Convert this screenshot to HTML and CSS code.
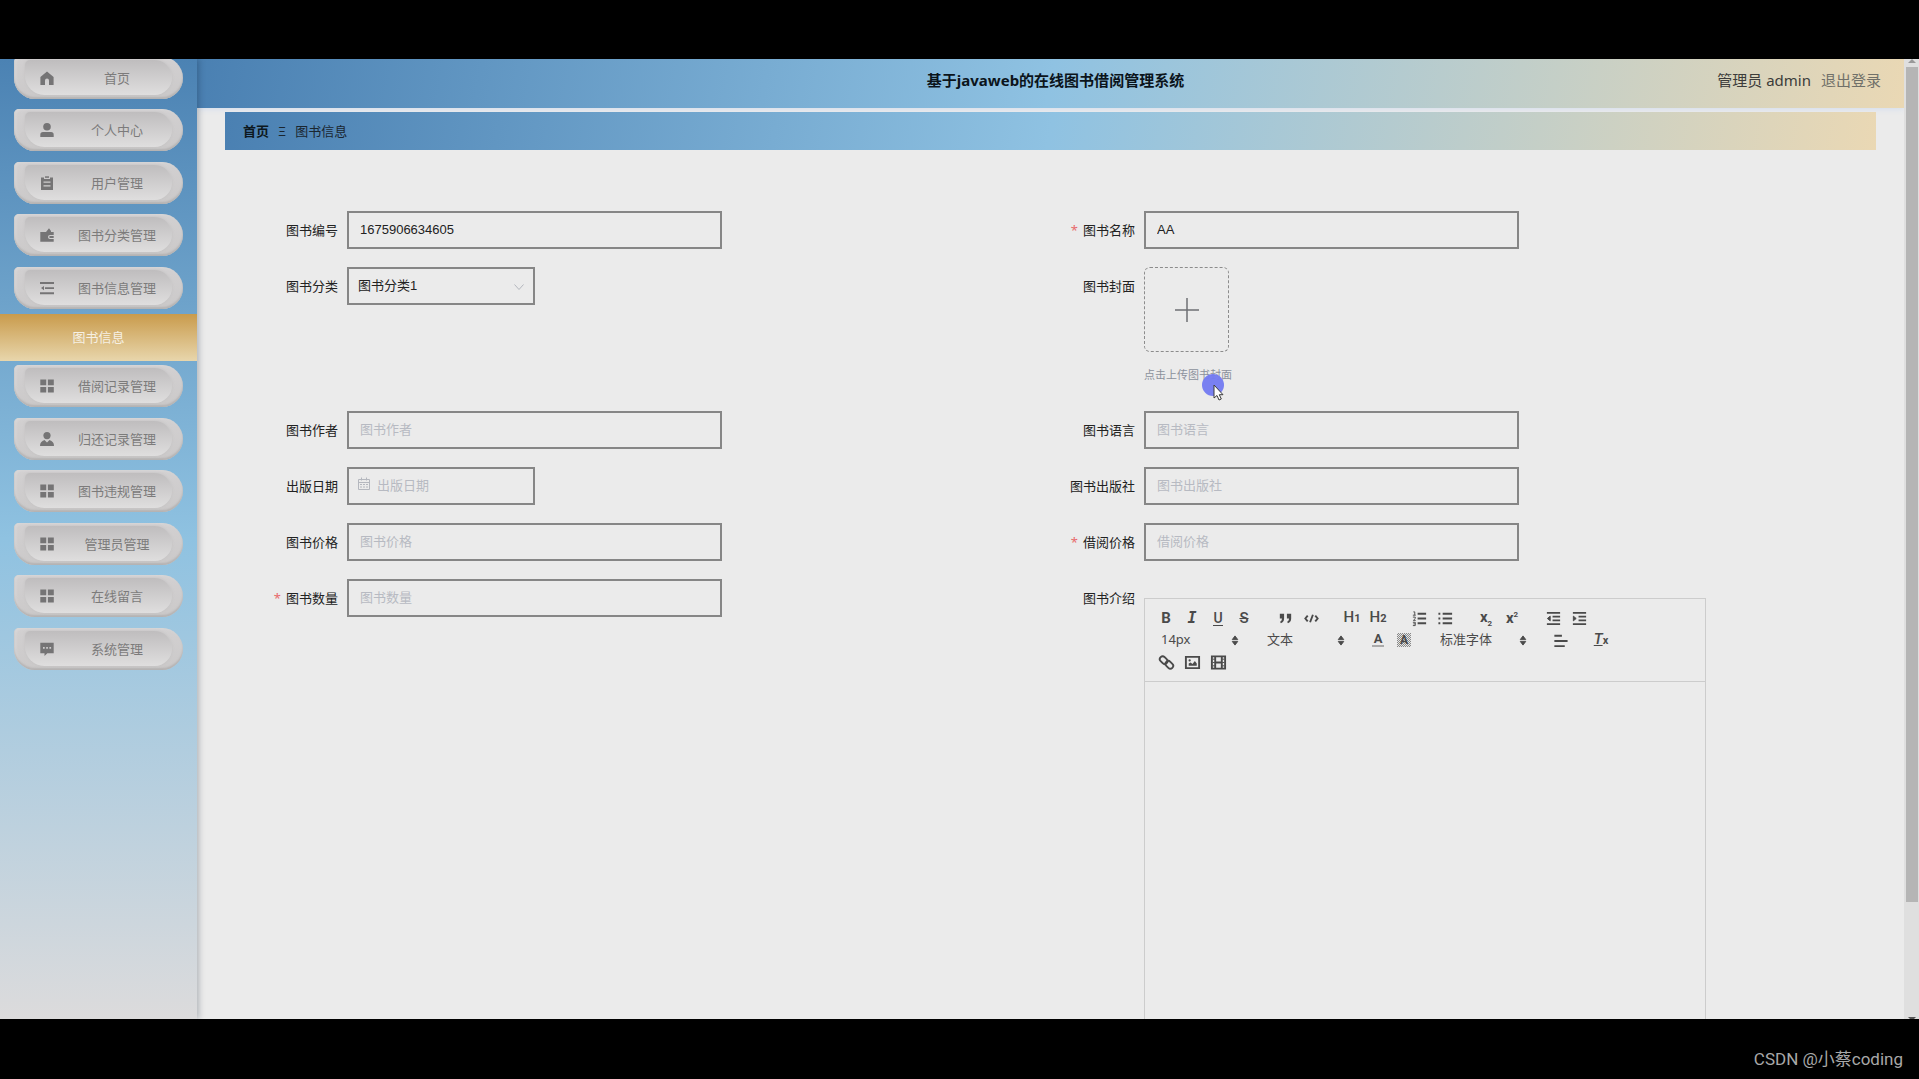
FILE: index.html
```html
<!DOCTYPE html>
<html lang="zh-CN">
<head>
<meta charset="utf-8">
<title>基于javaweb的在线图书借阅管理系统</title>
<link rel="stylesheet" href="styles.css">
</head>
<body>
<svg class="sprite" aria-hidden="true">
  <symbol id="i-home" viewBox="0 0 14 14"><path d="M7 .5 13.600 6v8H9V9.500a2 2 0 0 0-4 0V14H.4V6z"/></symbol>
  <symbol id="i-user" viewBox="0 0 14 14"><circle cx="7" cy="3.800" r="3.800"/><path d="M.3 14v-2.200A2.800 2.800 0 0 1 3 9h8a2.800 2.800 0 0 1 2.700 2.800V14z"/></symbol>
  <symbol id="i-order" viewBox="0 0 14 14"><path fill-rule="evenodd" d="M1 1.500h3V3h6V1.500h3V14H1zM3.500 5.500v1.300h7V5.500zm0 3.700v1.300h7V9.200z"/><path d="M5 .3h4v1.500H5z"/></symbol>
  <symbol id="i-wallet" viewBox="0 0 14 14"><path fill-rule="evenodd" d="M.3 4H6l3-3.700L11 3v1h2.700v3H10a2 2 0 0 0 0 4h3.700v2.700H.3z"/><path d="M10.200 8h3.500v2h-3.500a1 1 0 0 1 0-2z"/></symbol>
  <symbol id="i-fold" viewBox="0 0 14 14"><path d="M0 1h14v2H0zM5 6.200h9v1.800H5zM0 11.300h14v2H0zM1 7.100 4 5v4.200z"/></symbol>
  <symbol id="i-grid" viewBox="0 0 14 14"><path d="M.3.500h5.900v5.700H.3zM7.900.500h5.900v5.700H7.900zM.3 7.900h5.900v5.700H.3zM7.900 7.900h5.900v5.700H7.900z"/></symbol>
  <symbol id="i-custom" viewBox="0 0 14 14"><circle cx="7" cy="3.600" r="3.600"/><path d="M0 14c0-3.200 1.500-5 4.500-6L7 10.500 9.500 8c3 1 4.500 2.800 4.500 6z"/></symbol>
  <symbol id="i-chat" viewBox="0 0 14 14"><path fill-rule="evenodd" d="M.3.700h13.400v10.600H7.300L4.500 14v-2.700H.3zM3 5v1.700h1.700V5zm3.200 0v1.700h1.700V5zm3.200 0v1.700h1.700V5z"/></symbol>
  <symbol id="i-sort" viewBox="0 0 8 12"><path d="M4 1 7 5H1zM4 11 1 7h6z" stroke="currentColor" stroke-linejoin="round"/></symbol>
</svg>

<div class="letterbox letterbox-top"></div>
<div class="app">
  <nav class="sidebar">
    <ul class="menu">
      <li><a class="pill" href="#"><span class="face"><svg class="ico"><use href="#i-home"/></svg><span class="txt">首页</span></span></a></li>
      <li><a class="pill" href="#"><span class="face"><svg class="ico"><use href="#i-user"/></svg><span class="txt">个人中心</span></span></a></li>
      <li><a class="pill" href="#"><span class="face"><svg class="ico"><use href="#i-order"/></svg><span class="txt">用户管理</span></span></a></li>
      <li><a class="pill" href="#"><span class="face"><svg class="ico"><use href="#i-wallet"/></svg><span class="txt">图书分类管理</span></span></a></li>
      <li class="open"><a class="pill" href="#"><span class="face"><svg class="ico"><use href="#i-fold"/></svg><span class="txt">图书信息管理</span></span></a>
        <a class="sub" href="#">图书信息</a></li>
      <li><a class="pill" href="#"><span class="face"><svg class="ico"><use href="#i-grid"/></svg><span class="txt">借阅记录管理</span></span></a></li>
      <li><a class="pill" href="#"><span class="face"><svg class="ico"><use href="#i-custom"/></svg><span class="txt">归还记录管理</span></span></a></li>
      <li><a class="pill" href="#"><span class="face"><svg class="ico"><use href="#i-grid"/></svg><span class="txt">图书违规管理</span></span></a></li>
      <li><a class="pill" href="#"><span class="face"><svg class="ico"><use href="#i-grid"/></svg><span class="txt">管理员管理</span></span></a></li>
      <li><a class="pill" href="#"><span class="face"><svg class="ico"><use href="#i-grid"/></svg><span class="txt">在线留言</span></span></a></li>
      <li><a class="pill" href="#"><span class="face"><svg class="ico"><use href="#i-chat"/></svg><span class="txt">系统管理</span></span></a></li>
    </ul>
  </nav>

  <div class="main">
    <header class="header">
      <h1 class="title">基于javaweb的在线图书借阅管理系统</h1>
      <div class="account"><span>管理员 admin</span><a href="#">退出登录</a></div>
    </header>
    <div class="crumbs"><a href="#">首页</a><span class="sep">Ξ</span><span>图书信息</span></div>

    <form class="form">
      <div class="item">
        <label for="no">图书编号</label>
        <div class="field"><input id="no" class="box" type="text" value="1675906634605"></div>
      </div>
      <div class="item">
        <label for="name" class="required">图书名称</label>
        <div class="field"><input id="name" class="box" type="text" value="AA"></div>
      </div>
      <div class="item">
        <label for="type">图书分类</label>
        <div class="field"><div class="short">
          <select id="type" class="box"><option>图书分类1</option></select>
          <svg class="chev" viewBox="0 0 12 12"><path d="M1.500 3.500 6 8.500l4.500-5" fill="none" stroke="currentColor"/></svg>
        </div></div>
      </div>
      <div class="item">
        <label for="cover">图书封面</label>
        <div class="field">
          <button id="cover" class="upload" type="button" aria-label="上传图书封面"><svg viewBox="0 0 24 24"><path d="M12 0v24M0 12h24" fill="none" stroke="currentColor" stroke-width="1.500"/></svg></button>
          <div class="hint">点击上传图书封面
            <svg class="pointer" viewBox="0 0 26 30" aria-hidden="true"><circle cx="11" cy="11" r="11" fill="#737bf2"/><path d="M12 11v13l3-2.500 2 4.500 2.300-1-2-4.300h3.700z" fill="#fff" stroke="#333"/></svg>
          </div>
        </div>
      </div>
      <div class="item">
        <label for="author">图书作者</label>
        <div class="field"><input id="author" class="box" type="text" placeholder="图书作者"></div>
      </div>
      <div class="item">
        <label for="lang">图书语言</label>
        <div class="field"><input id="lang" class="box" type="text" placeholder="图书语言"></div>
      </div>
      <div class="item">
        <label for="date">出版日期</label>
        <div class="field"><div class="short">
          <svg class="cal" viewBox="0 0 14 14" fill="none" stroke="currentColor"><path d="M1.500 2.500h11v10h-11zM1.500 5.500h11M4.500 .5v3M9.500 .5v3M3 7.500h2m1 0h2m1 0h2M3 10h2m1 0h2m1 0h2"/></svg>
          <input id="date" class="box dated" type="text" placeholder="出版日期">
        </div></div>
      </div>
      <div class="item">
        <label for="press">图书出版社</label>
        <div class="field"><input id="press" class="box" type="text" placeholder="图书出版社"></div>
      </div>
      <div class="item">
        <label for="price">图书价格</label>
        <div class="field"><input id="price" class="box" type="text" placeholder="图书价格"></div>
      </div>
      <div class="item">
        <label for="rent" class="required">借阅价格</label>
        <div class="field"><input id="rent" class="box" type="text" placeholder="借阅价格"></div>
      </div>
      <div class="item">
        <label for="count" class="required">图书数量</label>
        <div class="field"><input id="count" class="box" type="text" placeholder="图书数量"></div>
      </div>
      <div class="item">
        <label for="intro">图书介绍</label>
        <div class="field">
          <div class="editor">
            <div class="toolbar">
              <div class="group">
                <button type="button"><b>B</b></button>
                <button type="button"><i class="slab">I</i></button>
                <button type="button"><span class="under">U</span></button>
                <button type="button"><s>S</s></button>
              </div>
              <div class="group">
                <button type="button" aria-label="引用"><svg viewBox="0 0 18 18"><path d="M3 4h4.500v5c0 2.500-1.200 4.200-3.400 5l-.9-1.500C4.600 11.700 5.200 10.500 5.200 9H3zM10.500 4H15v5c0 2.500-1.200 4.200-3.400 5l-.9-1.500c1.400-.8 2-2 2-3.500h-2.200z"/></svg></button>
                <button type="button" aria-label="代码"><svg viewBox="0 0 18 18" class="line"><path d="M5 6 2.500 9 5 12M13 6l2.500 3L13 12M10.500 5l-3 8"/></svg></button>
              </div>
              <div class="group">
                <button type="button"><span class="head">H<small>1</small></span></button>
                <button type="button"><span class="head">H<small>2</small></span></button>
              </div>
              <div class="group">
                <button type="button" aria-label="有序列表"><svg viewBox="0 0 18 18" class="line"><path d="M7 4h9M7 9h9M7 14h9"/><path stroke-width="1" d="M2.500 2h1.500v3.500M2 5.500h3M2 7.500h2.500v1.500L2.500 11H5M2 13h2.500v3.500H2M2.500 14.700h2"/></svg></button>
                <button type="button" aria-label="无序列表"><svg viewBox="0 0 18 18" class="line"><path d="M6 4h10M6 9h10M6 14h10M1.500 4h2M1.500 9h2M1.500 14h2"/></svg></button>
              </div>
              <div class="group">
                <button type="button"><span class="script">x<sub>2</sub></span></button>
                <button type="button"><span class="script">x<sup>2</sup></span></button>
              </div>
              <div class="group">
                <button type="button" aria-label="减少缩进"><svg viewBox="0 0 18 18" class="line"><path d="M2 3h14M8 7h8M8 11h8M2 15h14"/><path d="M5.500 6.500v5L2.500 9z" fill="currentColor" stroke-width="1"/></svg></button>
                <button type="button" aria-label="增加缩进"><svg viewBox="0 0 18 18" class="line"><path d="M2 3h14M8 7h8M8 11h8M2 15h14"/><path d="M2.500 6.500v5l3-2.500z" fill="currentColor" stroke-width="1"/></svg></button>
              </div>
              <div class="picker"><select aria-label="字号"><option>14px</option></select><svg><use href="#i-sort"/></svg></div>
              <div class="picker"><select aria-label="段落"><option>文本</option></select><svg><use href="#i-sort"/></svg></div>
              <div class="group">
                <button type="button"><span class="ink">A</span></button>
                <button type="button"><span class="mark">A</span></button>
              </div>
              <div class="picker wide"><select aria-label="字体"><option>标准字体</option></select><svg><use href="#i-sort"/></svg></div>
              <div class="group"><button type="button" aria-label="对齐"><svg viewBox="0 0 18 18" class="line"><path d="M2.500 4h8M2.500 9.500h14M2.500 15h11"/></svg></button></div>
              <div class="group"><button type="button"><span class="clean"><i>T</i><small>x</small></span></button></div>
              <div class="group">
                <button type="button" aria-label="链接"><svg viewBox="0 0 18 18" class="line"><rect x="1.500" y="3.500" width="9" height="6" rx="3" transform="rotate(45 6 6.500)"/><rect x="7.500" y="8.500" width="9" height="6" rx="3" transform="rotate(45 12 11.500)"/></svg></button>
                <button type="button" aria-label="图片"><svg viewBox="0 0 18 18" class="line"><path d="M2 3h14v12H2z"/><path d="M5 12.500V10l2-1 2 1.500 2.500-3L13.500 10v2.500z" fill="currentColor" stroke="none"/><circle cx="6" cy="6.800" r="1.200" fill="currentColor" stroke="none"/></svg></button>
                <button type="button" aria-label="视频"><svg viewBox="0 0 18 18" class="line"><path d="M2 2.500h14v13H2zM5.500 2.500v13M12.500 2.500v13M5.500 9h7"/><path stroke-width="1" d="M3 5.500h2M3 9h2M3 12.500h2M13 5.500h2M13 9h2M13 12.500h2"/></svg></button>
              </div>
            </div>
            <textarea id="intro"></textarea>
          </div>
        </div>
      </div>
    </form>
  </div>

  <div class="scroll" aria-hidden="true">
    <span class="arrow up"></span><span class="thumb"></span><span class="arrow down"></span>
  </div>
</div>
<footer class="letterbox letterbox-bottom">CSDN @小蔡coding</footer>
</body>
</html>
```
FILE: styles.css
```css
* { box-sizing: border-box; }

body {
  margin: 0;
  height: 100vh;
  display: flex;
  flex-direction: column;
  overflow: hidden;
  background: #000;
  color: #222;
  font: 13px/20px "Noto Sans", "Noto Sans CJK SC", sans-serif;
}

a { color: inherit; text-decoration: none; }
button, input, select, textarea { font: inherit; color: inherit; }
.sprite { position: absolute; width: 0; height: 0; }

.letterbox { flex: none; }
.letterbox-top { height: 59px; }
.letterbox-bottom {
  height: 60px;
  padding: 0 16px;
  text-align: right;
  font: 17px/80px Roboto, "Noto Sans CJK SC", sans-serif;
  color: #a8a8a8;
}

.app {
  flex: 1;
  min-height: 0;
  display: flex;
  overflow: hidden;
  background: #ebebeb;
}

/* sidebar */
.sidebar {
  flex: none;
  width: 197px;
  z-index: 1;
  background: linear-gradient(180deg, #4b82b3, #8fc2e1 50%, #dcdbdc);
  box-shadow: 2px 0 6px rgba(0, 21, 41, .25);
  clip-path: inset(0 -12px 0 0);
}
.menu { list-style: none; margin: -2px 0 0; padding: 0; }
.menu li { margin-bottom: 10px; }
.menu li:nth-child(even) { margin-bottom: 11px; }
.menu .open { margin-bottom: 4px; }
.pill {
  display: block;
  height: 42px;
  margin: 0 14px;
  padding: 3px 11px;
  border-radius: 5px 21px 21px 21px;
  background: linear-gradient(180deg, #d2d0d1, #cbc9c9);
  box-shadow: inset 0 -2px 2px #b4b2b2, inset 2px 1px 3px #d9d8d9;
}
.face {
  display: flex;
  align-items: center;
  gap: 8px;
  height: 35px;
  padding-left: 15px;
  border-radius: 5px 18px 18px 20px;
  background: linear-gradient(180deg, #bfbdbe, #dfdede);
  box-shadow: 0 0 3px #c3c2c2;
  color: #7c7b7b;
}
.ico { flex: none; width: 14px; height: 14px; fill: #757475; }
.txt { flex: 1; text-align: center; }
.sub {
  display: block;
  margin-top: 5px;
  text-align: center;
  line-height: 47px;
  color: #f6f0e4;
  background: linear-gradient(180deg, #c99b4c, #e8d6ac);
}

/* header */
.main { flex: 1; min-width: 0; }
.header {
  display: grid;
  grid-template-columns: 1fr auto 1fr;
  align-items: center;
  height: 49px;
  padding: 0 23px 8px 33px;
  background: linear-gradient(100deg, #4a80b2, #8fc2e2 50%, #ead8b4);
  box-shadow: 0 1px 6px #d3deee;
  font-size: 15px;
}
.title { grid-column: 2; margin: 0; font-size: 15px; line-height: 20px; color: #0b141b; }
.account { display: flex; justify-content: flex-end; gap: 10px; color: #3c3c3a; }
.account a { color: #707069; }

.crumbs {
  display: flex;
  align-items: center;
  gap: 9px;
  height: 38px;
  margin: 4px 28px 0;
  padding-left: 18px;
  background: linear-gradient(100deg, #4a80b2, #8fc2e2 50%, #ead8b4);
  color: #1a2630;
}
.crumbs a { font-weight: bold; color: #0d1820; }

/* form */
.form {
  display: grid;
  grid-template-columns: 1fr 1fr;
  row-gap: 18px;
  padding: 61px 60px 0 53px;
}
.item { display: flex; min-width: 0; }
.item > label {
  flex: none;
  width: 97px;
  padding-right: 9px;
  text-align: right;
  line-height: 38px;
}
.required::before { content: "*"; margin-right: 5px; color: #e8696b; }
.field { flex: 1; min-width: 0; }
.box {
  display: block;
  width: 100%;
  max-width: 375px;
  height: 38px;
  padding: 0 11px 2px;
  border: 2px solid #868686;
  border-radius: 0;
  background: transparent;
  outline: 0;
  appearance: none;
  font-family: "Liberation Sans", "Noto Sans CJK SC", sans-serif;
}
.box::placeholder { color: #b7bac2; opacity: 1; }
.short { position: relative; max-width: 188px; }
select.box { padding: 0 9px; }
.dated { padding-left: 28px; }
.chev, .cal { position: absolute; color: #b4b7be; }
.chev { right: 10px; top: 14px; width: 12px; height: 12px; }
.cal { left: 10px; top: 10px; width: 14px; height: 14px; }

.upload {
  display: grid;
  place-items: center;
  width: 85px;
  height: 85px;
  padding: 0;
  border: 1px dashed #8c8c8c;
  border-radius: 6px;
  background: transparent;
  color: #6f7074;
}
.upload svg { width: 24px; height: 24px; }
.hint {
  position: relative;
  width: max-content;
  margin-top: 13px;
  padding-bottom: 8px;
  font-size: 11px;
  color: #8b919c;
}
.pointer { position: absolute; left: 58px; top: 9px; width: 26px; height: 30px; opacity: .95; }

/* rich text editor */
.editor { max-width: 562px; margin-top: 19px; border: 1px solid #ccc; }
.toolbar {
  display: flex;
  flex-wrap: wrap;
  column-gap: 15px;
  padding: 8px 16px 8px 8px;
  border-bottom: 1px solid #ccc;
  color: #4a4a4a;
}
.group { display: flex; }
.group button {
  display: grid;
  place-items: center;
  width: 26px;
  height: 22px;
  padding: 0;
  border: 0;
  background: none;
  font: 500 15px/16px Roboto, sans-serif;
}
.group svg { width: 17px; height: 17px; fill: currentColor; }
.group .line { fill: none; stroke: currentColor; stroke-width: 2; }
.slab { font-family: "DejaVu Sans Mono", monospace; font-weight: bold; }
.under { font-size: 14px; line-height: 14px; border-bottom: 1px solid; }
.head small { font-size: 11px; font-weight: bold; }
.script { font-weight: bold; }
.script sub, .script sup { font-size: 8px; line-height: 8px; }
.ink { width: 12px; font-size: 13px; line-height: 12px; font-weight: bold; border-bottom: 2px solid #aaa; }
.mark {
  width: 14px;
  font-size: 12px;
  line-height: 14px;
  font-weight: bold;
  background: repeating-conic-gradient(#888 0 25%, #e6e6e6 0 50%) 0 0 / 2px 2px;
}
.clean i { text-decoration: underline; }
.clean small { font-size: 11px; font-weight: bold; }
.picker { position: relative; width: 91px; height: 22px; }
.picker.wide { width: 100px; }
.picker select {
  width: 100%;
  height: 22px;
  padding: 0 8px 2px;
  border: 0;
  background: none;
  appearance: none;
}
.picker svg { position: absolute; right: 5px; top: 6px; width: 8px; height: 11px; fill: currentColor; }
#intro {
  display: block;
  width: 100%;
  height: 400px;
  padding: 12px 15px;
  border: 0;
  background: none;
  resize: none;
  outline: 0;
}

/* scrollbar track beside the page */
.scroll {
  flex: none;
  display: flex;
  flex-direction: column;
  align-items: center;
  width: 15px;
  background: #dfdfdf;
}
.arrow { border: 4px solid transparent; height: 0; }
.up { border-top: 0; border-bottom-color: #999; margin: 0 0 4px; }
.thumb { width: 12px; flex: 0 0 87%; background: #b5b5b5; }
.down { border-bottom: 0; border-top-color: #555; margin-top: auto; margin-bottom: -2px; }
```
